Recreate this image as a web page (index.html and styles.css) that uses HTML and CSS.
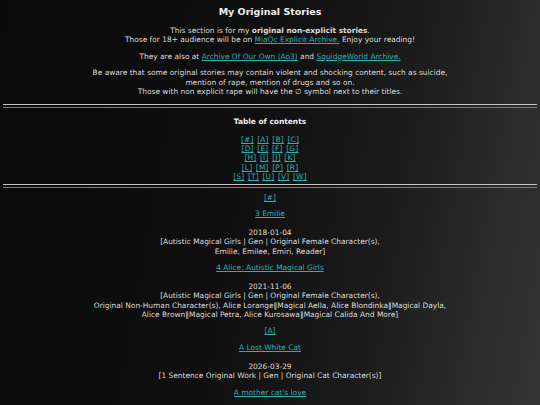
FILE: index.html
```html
<!DOCTYPE html>
<html>
<head>
<meta charset="utf-8">
<link rel="stylesheet" href="styles.css">
</head>
<body>
<main class="page">
  <h1 class="title">My Original Stories</h1>
  <p class="para">This section is for my <b>original non-explicit stories</b>.<br>Those for 18+ audience will be on <a href="#">MiaQc Explicit Archive.</a> Enjoy your reading!</p>
  <p class="para">They are also at <a href="#">Archive Of Our Own (Ao3)</a> and <a href="#">SquidgeWorld Archive.</a></p>
  <p class="para">Be aware that some original stories may contain violent and shocking content, such as suicide,<br>mention of rape, mention of drugs and so on.<br>Those with non explicit rape will have the ∅ symbol next to their titles.</p>
  <div class="rule rule-top"></div>
  <h2 class="toc-title">Table of contents</h2>
  <p class="toc">
    <a href="#">[#]</a> <a href="#">[A]</a> <a href="#">[B]</a> <a href="#">[C]</a><br>
    <a href="#">[D]</a> <a href="#">[E]</a> <a href="#">[F]</a> <a href="#">[G]</a><br>
    <a href="#">[H]</a> <a href="#">[I]</a> <a href="#">[J]</a> <a href="#">[K]</a><br>
    <a href="#">[L]</a> <a href="#">[M]</a> <a href="#">[P]</a> <a href="#">[R]</a><br>
    <a href="#">[S]</a> <a href="#">[T]</a> <a href="#">[U]</a> <a href="#">[V]</a> <a href="#">[W]</a>
  </p>
  <div class="rule rule-bottom"></div>
  <p class="letter"><a href="#">[#]</a></p>
  <p class="story"><a href="#">3 Emilie</a></p>
  <p class="meta">2018-01-04<br>[Autistic Magical Girls | Gen | Original Female Character(s),<br>Emilie, Emilee, Emiri, Reader]</p>
  <p class="story"><a href="#">4 Alice: Autistic Magical Girls</a></p>
  <p class="meta">2021-11-06<br>[Autistic Magical Girls | Gen | Original Female Character(s),<br>Original Non-Human Character(s), Alice Lorange‖Magical Aella, Alice Blondinka‖Magical Dayla,<br>Alice Brown‖Magical Petra, Alice Kurosawa‖Magical Calida And More]</p>
  <p class="letter"><a href="#">[A]</a></p>
  <p class="story"><a href="#">A Lost White Cat</a></p>
  <p class="meta">2026-03-29<br>[1 Sentence Original Work | Gen | Original Cat Character(s)]</p>
  <p class="story"><a href="#">A mother cat's love</a></p>
</main>
</body>
</html>
```
FILE: styles.css
```css
html, body {
  margin: 0;
  padding: 0;
  height: 100%;
}
body {
  background: linear-gradient(100deg, #0a0a0a 0%, #0f0f0f 45%, #1c1c1c 70%, #353535 100%);
  color: #dcdcdc;
  font-family: "DejaVu Sans", Verdana, sans-serif;
  font-size: 7.45px;
  line-height: 9.3px;
  overflow: hidden;
}
.page {
  padding: 0 3px;
  text-align: center;
}
a {
  color: #28b2b2;
  text-decoration: underline;
}
.title {
  font-size: 9.5px;
  line-height: 12px;
  font-weight: bold;
  color: #f0f0f0;
  margin: 6.3px 0 7.7px;
}
p {
  margin: 7.3px 0;
}
.title + .para {
  margin-top: 0;
}
.rule {
  height: 2.7px;
  border-top: 1.7px solid #c4c4c4;
  border-bottom: 1.7px solid #7c7c7c;
}
.rule-top {
  margin-top: 7px;
}
.toc-title {
  font-size: 7.45px;
  line-height: 9.3px;
  font-weight: bold;
  color: #f0f0f0;
  margin: 9px 0 8px;
}
.toc {
  margin: 0 0 2.4px;
  word-spacing: 1px;
  letter-spacing: 0.2px;
}
.rule-bottom + .letter {
  margin-top: 4.6px;
}
.story {
  margin-bottom: 9.4px;
}
.meta {
  margin-top: 0;
}
```
